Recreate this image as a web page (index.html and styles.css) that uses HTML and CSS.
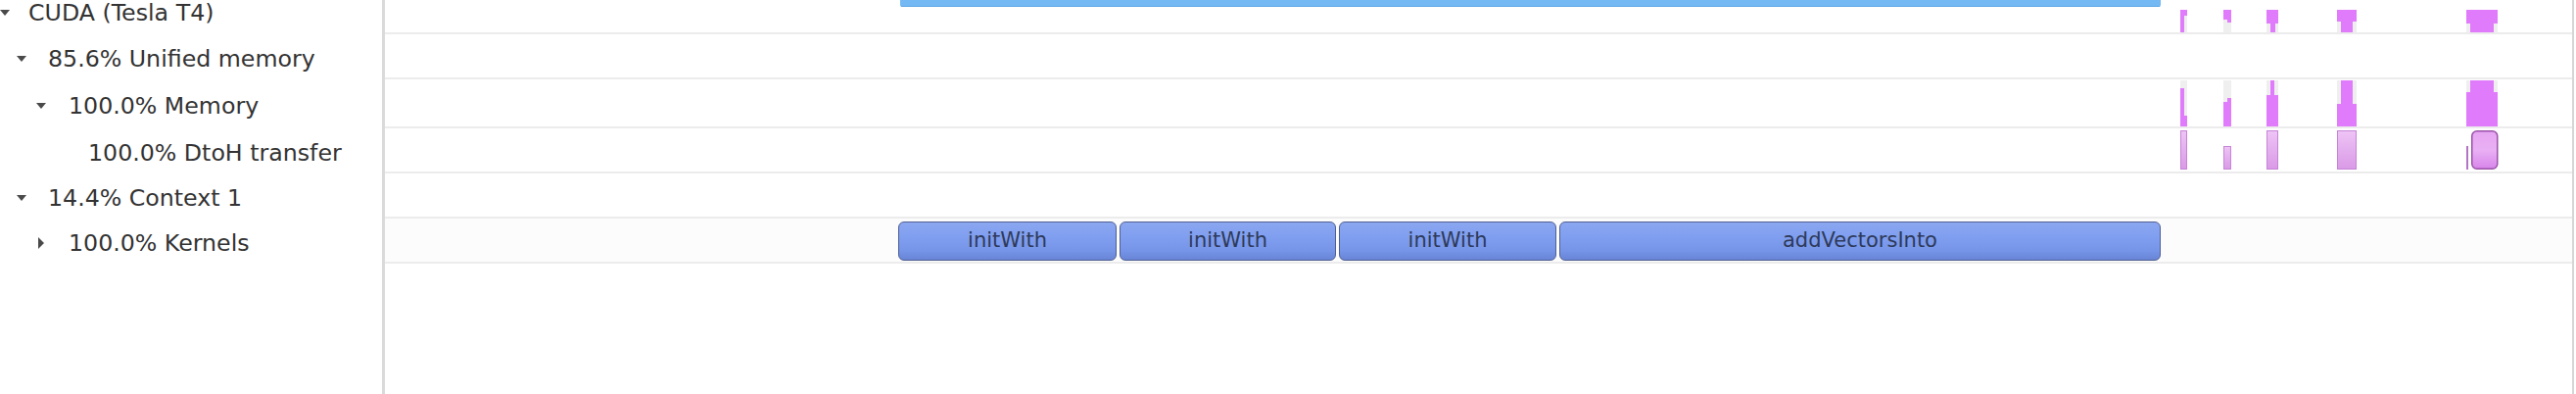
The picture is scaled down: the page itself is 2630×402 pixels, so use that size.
FILE: index.html
```html
<!DOCTYPE html>
<html>
<head>
<meta charset="utf-8">
<link rel="stylesheet" href="styles.css">
</head>
<body>
<div class="app">
  <div class="tree">
    <div class="node r0 lv0"><span class="tog down"></span><span class="label">CUDA (Tesla T4)</span></div>
    <div class="node r1 lv1"><span class="tog down"></span><span class="label">85.6% Unified memory</span></div>
    <div class="node r2 lv2"><span class="tog down"></span><span class="label">100.0% Memory</span></div>
    <div class="node r3 lv3"><span class="label">100.0% DtoH transfer</span></div>
    <div class="node r4 lv1"><span class="tog down"></span><span class="label">14.4% Context 1</span></div>
    <div class="node r5 lv2"><span class="tog right"></span><span class="label">100.0% Kernels</span></div>
  </div>
  <div class="timeline">
    <div class="trow r0">
      <svg class="lane" width="2233" height="45" viewBox="0 0 2233 45">
        <rect x="526" y="0" width="1287" height="19" rx="2" fill="#74b9f4"/>
        <rect x="527" y="18" width="1285" height="1" fill="#5da6e6"/>
        <g fill="#efefef">
          <rect x="1833" y="22" width="7" height="23"/>
          <rect x="1877" y="22" width="8" height="23"/>
          <rect x="1921" y="22" width="12" height="23"/>
          <rect x="1993" y="22" width="20" height="23"/>
          <rect x="2125" y="22" width="32" height="23"/>
        </g>
        <g fill="#e07cfb">
          <rect x="1833" y="22" width="7" height="6"/>
          <rect x="1833" y="28" width="4" height="17"/>
          <rect x="1877" y="22" width="8" height="10"/>
          <rect x="1881" y="32" width="4" height="3"/>
          <rect x="1921" y="22" width="12" height="14"/>
          <rect x="1925" y="36" width="5" height="9"/>
          <rect x="1993" y="22" width="20" height="12"/>
          <rect x="1997" y="34" width="12" height="11"/>
          <rect x="2125" y="22" width="32" height="14"/>
          <rect x="2129" y="36" width="24" height="9"/>
        </g>
      </svg>
    </div>
    <div class="trow r1"></div>
    <div class="trow r2">
      <svg class="lane" width="2233" height="48" viewBox="0 0 2233 48">
        <g fill="#efefef">
          <rect x="1833" y="1" width="7" height="47"/>
          <rect x="1877" y="1" width="8" height="47"/>
          <rect x="1921" y="1" width="12" height="47"/>
          <rect x="1993" y="1" width="20" height="47"/>
          <rect x="2125" y="1" width="32" height="47"/>
        </g>
        <g fill="#e07cfb">
          <rect x="1833" y="9" width="4" height="28"/>
          <rect x="1833" y="37" width="7" height="11"/>
          <rect x="1881" y="19" width="4" height="4"/>
          <rect x="1877" y="23" width="8" height="25"/>
          <rect x="1925" y="1" width="4" height="15"/>
          <rect x="1921" y="16" width="12" height="32"/>
          <rect x="1997" y="1" width="12" height="24"/>
          <rect x="1993" y="25" width="20" height="23"/>
          <rect x="2129" y="1" width="24" height="12"/>
          <rect x="2125" y="13" width="32" height="35"/>
        </g>
      </svg>
    </div>
    <div class="trow r3">
      <svg class="lane" width="2233" height="44" viewBox="0 0 2233 44">
        <defs>
          <linearGradient id="lt" x1="0" y1="0" x2="0" y2="1">
            <stop offset="0" stop-color="#eec4f6"/>
            <stop offset="1" stop-color="#d99ae6"/>
          </linearGradient>
          <linearGradient id="bx" x1="0" y1="0" x2="0" y2="1">
            <stop offset="0" stop-color="#e6a6f2"/>
            <stop offset="0.5" stop-color="#e9b0f4"/>
            <stop offset="1" stop-color="#d885ea"/>
          </linearGradient>
        </defs>
        <g fill="url(#lt)" stroke="#c684d6" stroke-width="1">
          <rect x="1833.5" y="2.5" width="6" height="39"/>
          <rect x="1877.5" y="18.5" width="7" height="23"/>
          <rect x="1921.5" y="2.5" width="11" height="39"/>
          <rect x="1993.5" y="2.5" width="19" height="39"/>
        </g>
        <rect x="2125" y="18" width="2" height="24" fill="#b274c4"/>
        <rect x="2130.75" y="2.75" width="26" height="38.5" rx="5" fill="url(#bx)" stroke="#9a52a8" stroke-width="1.5"/>
      </svg>
    </div>
    <div class="trow r4"></div>
    <div class="trow r5 kernels">
      <div class="kbar w1">initWith</div>
      <div class="kbar w2">initWith</div>
      <div class="kbar w3">initWith</div>
      <div class="kbar w4">addVectorsInto</div>
    </div>
  </div>
</div>
</body>
</html>
```
FILE: styles.css
```css
html, body {
  margin: 0;
  padding: 0;
  background: #ffffff;
  overflow: hidden;
}

body {
  width: 2630px;
  height: 402px;
}

.app {
  display: flex;
  margin-top: -12px;
  height: 414px;
}

.tree {
  width: 390px;
  flex: none;
  border-right: 3px solid #dadada;
  font-family: "DejaVu Sans", "Liberation Sans", sans-serif;
  font-size: 23.7px;
  color: #333333;
}

.timeline {
  width: 2233px;
  flex: none;
  border-right: 2px solid #d6d6d6;
}

.r0 { height: 47px; }
.r1 { height: 46px; }
.r2 { height: 50px; }
.r3 { height: 46px; }
.r4 { height: 46px; }
.r5 { height: 46px; }

.node {
  display: flex;
  align-items: center;
  box-sizing: border-box;
  white-space: nowrap;
  padding-top: 3px;
}

.lv0 { padding-left: 0; }
.lv1 { padding-left: 17px; }
.lv2 { padding-left: 37px; }
.lv3 { padding-left: 90px; }

.tog {
  width: 29px;
  flex: none;
  display: flex;
  align-items: center;
}

.lv1 .tog { width: 32px; }
.lv2 .tog { width: 33px; }

.tog.down::before {
  content: "";
  display: block;
  width: 0;
  height: 0;
  border-left: 5.5px solid transparent;
  border-right: 5.5px solid transparent;
  border-top: 6px solid #4a4a4a;
}

.tog.right::before {
  content: "";
  display: block;
  width: 0;
  height: 0;
  margin-left: 2px;
  border-top: 6px solid transparent;
  border-bottom: 6px solid transparent;
  border-left: 6px solid #4a4a4a;
}

.trow {
  box-sizing: border-box;
  border-bottom: 2px solid #ececec;
}

.lane {
  display: block;
}

.r5.kernels {
  background: #fcfcfc;
}

.kernels {
  display: flex;
  align-items: flex-start;
  gap: 3px;
  padding-left: 524px;
  padding-top: 3px;
}

.kbar {
  box-sizing: border-box;
  height: 40px;
  border: 1.5px solid #4f5f92;
  border-radius: 6px;
  background: linear-gradient(to bottom, #8ba7f1 0%, #7e9def 45%, #7695e8 75%, #6884d6 100%);
  font-family: "DejaVu Sans", "Liberation Sans", sans-serif;
  font-size: 21px;
  color: #2e3a5a;
  display: flex;
  align-items: center;
  justify-content: center;
  white-space: nowrap;
  padding-bottom: 2px;
}

.w1 { width: 223px; }
.w2 { width: 221px; }
.w3 { width: 222px; }
.w4 { width: 614px; }
```
